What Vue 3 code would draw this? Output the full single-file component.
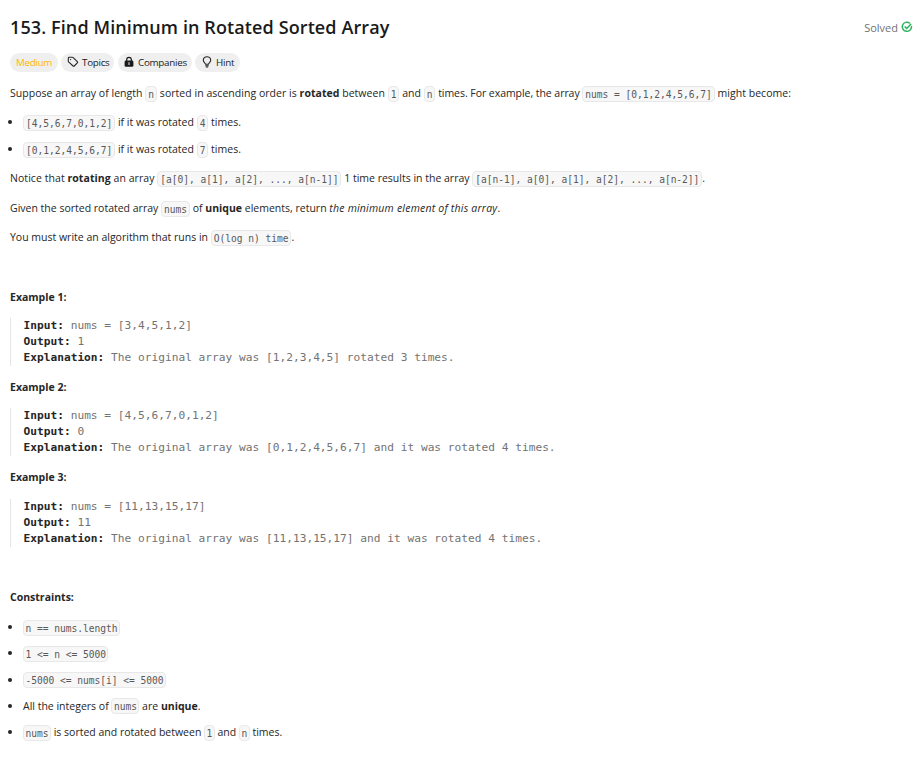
<script setup>
const examples = [
  { id: 1, input: 'nums = [3,4,5,1,2]', output: '1', why: 'The original array was [1,2,3,4,5] rotated 3 times.' },
  { id: 2, input: 'nums = [4,5,6,7,0,1,2]', output: '0', why: 'The original array was [0,1,2,4,5,6,7] and it was rotated 4 times.' },
  { id: 3, input: 'nums = [11,13,15,17]', output: '11', why: 'The original array was [11,13,15,17] and it was rotated 4 times.' },
]
</script>

<template>
  <main class="page">
    <header class="head">
      <h1>153. Find Minimum in Rotated Sorted Array</h1>
      <div class="solved">
        <span>Solved</span>
        <svg width="12" height="12" viewBox="0 0 12 12" fill="none" stroke="#2db55d" stroke-width="1.5" stroke-linecap="round" stroke-linejoin="round">
          <path d="M8.4 1.9A4.6 4.6 0 1 0 10.5 5.6" />
          <path d="M4.1 5.9 5.7 7.4 9.8 3.2" />
        </svg>
      </div>
    </header>

    <div class="tags">
      <span class="tag medium">Medium</span>
      <span class="tag topics">
        <svg width="12" height="12" viewBox="0 0 12 12" fill="none" stroke="#262626" stroke-width="1.1" stroke-linejoin="round">
          <path d="M1.3 2.2q0-.9.9-.9h3.1q.5 0 .9.4l4.1 4q.6.6 0 1.2l-3 3.1q-.6.6-1.2 0L1.8 6.2q-.5-.5-.5-1z" />
          <circle cx="3.6" cy="3.6" r=".65" fill="#262626" stroke="none" />
        </svg>
        <b>Topics</b>
      </span>
      <span class="tag companies">
        <svg width="10" height="12" viewBox="0 0 10 12">
          <path d="M2.7 5V3.6a2.3 2.3 0 0 1 4.6 0V5" fill="none" stroke="#1a1a1a" stroke-width="1.2" />
          <rect x=".6" y="4.6" width="8.8" height="6.2" rx="1.3" fill="#1a1a1a" />
          <path d="M5 6.6v2" stroke="#efefef" stroke-width="1" stroke-linecap="round" />
        </svg>
        <b>Companies</b>
      </span>
      <span class="tag hint">
        <svg width="10" height="12" viewBox="0 0 10 12" fill="none" stroke="#262626" stroke-width="1.1" stroke-linecap="round">
          <path d="M3.6 8.2C3.4 7 1.3 6.3 1.3 4.2a3.7 3.5 0 0 1 7.4 0C8.7 6.3 6.6 7 6.4 8.2z" />
          <path d="M3.7 9.7h2.6M4.3 11h1.4" />
        </svg>
        <b>Hint</b>
      </span>
    </div>

    <p class="p1"><span>Suppose an array of length </span><code>n</code><span> sorted in ascending order is <strong>rotated</strong> between </span><code>1</code><span> and </span><code>n</code><span class="tight"> times. For example, the array </span><code>nums = [0,1,2,4,5,6,7]</code><span> might become:</span></p>
    <ul class="cases">
      <li><code>[4,5,6,7,0,1,2]</code><span> if it was rotated </span><code>4</code><span> times.</span></li>
      <li><code>[0,1,2,4,5,6,7]</code><span> if it was rotated </span><code>7</code><span> times.</span></li>
    </ul>
    <p class="p2"><span>Notice that <strong>rotating</strong> an array </span><code>[a[0], a[1], a[2], ..., a[n-1]]</code><span class="tight"> 1 time results in the array </span><code>[a[n-1], a[0], a[1], a[2], ..., a[n-2]]</code><span>.</span></p>
    <p class="p3"><span>Given the sorted rotated array </span><code>nums</code><span> of <strong>unique</strong> elements, return <em>the minimum element of this array</em>.</span></p>
    <p class="p4"><span>You must write an algorithm that runs in </span><code>O(log n) time</code><span>.</span></p>

    <section class="examples">
      <div v-for="e in examples" :key="e.id" class="example">
        <p class="label">Example {{ e.id }}:</p>
        <pre><strong>Input:</strong> {{ e.input }}
<strong>Output:</strong> {{ e.output }}
<strong>Explanation:</strong> {{ e.why }}</pre>
      </div>
    </section>

    <p class="label">Constraints:</p>
    <ul class="constraints">
      <li><code>n == nums.length</code></li>
      <li><code>1 &lt;= n &lt;= 5000</code></li>
      <li><code>-5000 &lt;= nums[i] &lt;= 5000</code></li>
      <li><span>All the integers of </span><code>nums</code><span> are <strong>unique</strong>.</span></li>
      <li><code>nums</code><span> is sorted and rotated between </span><code>1</code><span> and </span><code>n</code><span> times.</span></li>
    </ul>
  </main>
</template>

<style>
body { background: #fff; }
</style>

<style scoped>
.page {
  box-sizing: border-box;
  width: 922px;
  height: 771px;
  padding: 14px 9px 0 10px;
  overflow: hidden;
  background: #fff;
  color: #262626;
  font-family: "Open Sans", "Noto Sans", sans-serif;
  font-size: 10.5px;
}
.head { display: flex; justify-content: space-between; height: 28px; }
h1 {
  margin: 0;
  font-size: 18px;
  line-height: 27px;
  font-weight: 600;
  letter-spacing: 0.11px;
  color: #1a1a1a;
  white-space: nowrap;
}
.solved { display: flex; align-items: center; gap: 3px; height: 26px; color: #737373; font-size: 11px; }
.tags { display: flex; height: 19px; margin-top: 11px; }
.tag {
  box-sizing: border-box;
  display: flex;
  align-items: center;
  height: 19px;
  border-radius: 10px;
  background: #efefef;
  color: #1a1a1a;
  font-size: 9.8px;
  letter-spacing: -0.27px;
  line-height: 20px;
  white-space: nowrap;
}
.tag b { font-weight: 400; height: 19px; }
.tag svg { flex: none; margin-bottom: 1px; }
.medium { width: 48px; justify-content: center; color: #ffb800; margin-right: 3px; }
.topics { width: 53px; padding-left: 6px; gap: 3px; margin-right: 4px; }
.companies { width: 74px; padding-left: 6px; gap: 4px; margin-right: 3px; }
.hint { width: 45px; padding-left: 7px; gap: 4px; }
p, li { display: flex; align-items: center; height: 20px; line-height: 20px; margin: 0; white-space: pre; }
.p1 { margin-top: 11px; letter-spacing: 0.035px; }
.p1 .tight { letter-spacing: -0.05px; }
ul { list-style: none; margin: 0; padding: 0; }
li::before { content: ""; flex: none; width: 4px; height: 4px; margin: 0 11px 0 -2px; border-radius: 50%; background: #262626; }
.cases { display: grid; gap: 7px; margin-top: 9px; }
.p2 { margin-top: 9px; letter-spacing: 0.06px; }
.p2 .tight { letter-spacing: 0; }
.p3 { margin-top: 10px; }
.p3 em { letter-spacing: 0.21px; }
.p4 { margin-top: 9px; }
strong { font-weight: 700; }
code {
  box-sizing: border-box;
  height: 16px;
  margin-top: 1px;
  padding: 0 2px;
  border: 1px solid #e8e8e8;
  border-radius: 4px;
  background: #f7f7f7;
  color: #595959;
  font-family: "DejaVu Sans Mono", monospace;
  font-size: 9.6px;
  line-height: 16px;
  letter-spacing: -0.03px;
}
.examples { display: grid; gap: 11px; margin: 40px 0; }
.label { font-weight: 700; }
pre {
  margin: 11px 0 0;
  padding-left: 12.5px;
  border-left: 1px solid #e5e5e5;
  color: #737373;
  font: 11.2px/16px "DejaVu Sans Mono", monospace;
}
.example:last-child pre { margin-top: 12px; }
pre strong { color: #262626; }
.constraints { display: grid; gap: 6.3px; margin-top: 10px; }
.constraints code { padding: 0 1.5px; }
</style>
